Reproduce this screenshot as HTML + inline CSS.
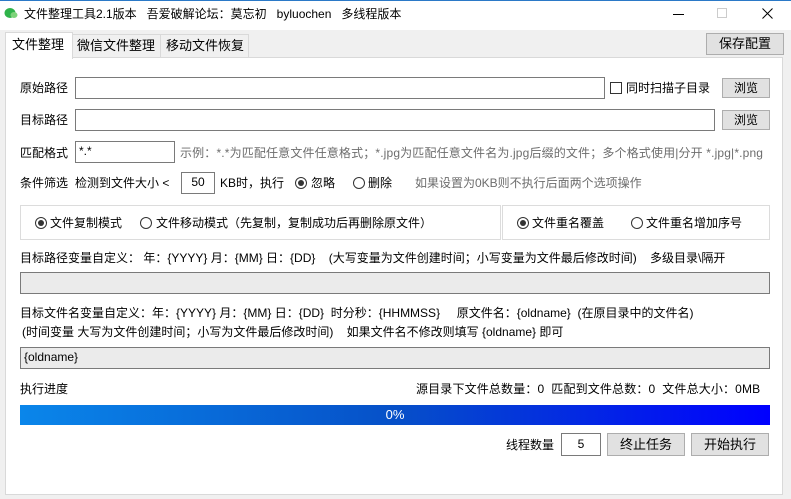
<!DOCTYPE html>
<html><head><meta charset="utf-8"><style>
*{box-sizing:border-box;margin:0;padding:0}
body{width:791px;height:499px;background:#f0f0f0;font-family:"Liberation Sans","Microsoft YaHei","Noto Sans CJK SC",sans-serif;font-size:12px;color:#000;position:relative;overflow:hidden}
.a{position:absolute;white-space:nowrap;line-height:16px}
.inp{position:absolute;background:#fff;border:1px solid #7a7a7a;line-height:19px;padding-left:3px}
.btn{position:absolute;background:#e1e1e1;border:1px solid #adadad;text-align:center}
.rad{position:absolute;width:12px;height:12px;border:1px solid #333;border-radius:50%;background:#fff}
.rad.on::after{content:"";position:absolute;left:2px;top:2px;width:6px;height:6px;border-radius:50%;background:#333}
.g{color:#6d6d6d}
.grp{position:absolute;border:1px solid #dcdcdc}
</style></head><body>
<div style="position:absolute;left:0;top:0;width:791px;height:30px;background:#fff;border-top:1px solid #2b79c7"></div>
<svg class="a" style="left:4px;top:6px" width="14" height="14" viewBox="0 0 14 14"><ellipse cx="6" cy="7" rx="5.5" ry="5" fill="#2fb34a"/><ellipse cx="10" cy="9" rx="3.5" ry="3" fill="#7dd37a"/></svg>
<div class="a" style="left:24px;top:6px">文件整理工具2.1版本&nbsp;&nbsp;&nbsp;吾爱破解论坛：莫忘初&nbsp;&nbsp;&nbsp;byluochen&nbsp;&nbsp;&nbsp;多线程版本</div>
<div style="position:absolute;left:673px;top:14px;width:11px;height:1px;background:#000"></div>
<div style="position:absolute;left:717px;top:8px;width:10px;height:10px;border:1px solid #ccc"></div>
<svg style="position:absolute;left:762px;top:8px" width="11" height="11"><path d="M0.5 0.5L10.5 10.5M10.5 0.5L0.5 10.5" stroke="#000" stroke-width="1"/></svg>

<div style="position:absolute;left:5px;top:57px;width:778px;height:438px;background:#fff;border:1px solid #d9d9d9"></div>
<div style="position:absolute;left:72px;top:34px;width:89px;height:24px;background:#f0f0f0;border:1px solid #d9d9d9"></div>
<div style="position:absolute;left:160px;top:34px;width:89px;height:24px;background:#f0f0f0;border:1px solid #d9d9d9"></div>
<div style="position:absolute;left:5px;top:32px;width:68px;height:27px;background:#fff;border:1px solid #d9d9d9;border-bottom:none"></div>
<div class="a" style="left:12px;top:37px;font-size:13px">文件整理</div>
<div class="a" style="left:77px;top:38px;font-size:13px">微信文件整理</div>
<div class="a" style="left:166px;top:38px;font-size:13px">移动文件恢复</div>
<div class="btn" style="left:706px;top:33px;width:78px;height:22px;line-height:20px;font-size:13px">保存配置</div>

<div class="a" style="left:20px;top:80px">原始路径</div>
<div class="inp" style="left:75px;top:77px;width:530px;height:22px"></div>
<div style="position:absolute;left:610px;top:82px;width:12px;height:12px;border:1px solid #333;background:#fff"></div>
<div class="a" style="left:626px;top:80px">同时扫描子目录</div>
<div class="btn" style="left:722px;top:78px;width:48px;height:20px;line-height:18px">浏览</div>

<div class="a" style="left:20px;top:112px">目标路径</div>
<div class="inp" style="left:75px;top:109px;width:640px;height:22px"></div>
<div class="btn" style="left:722px;top:110px;width:48px;height:20px;line-height:18px">浏览</div>

<div class="a" style="left:20px;top:145px">匹配格式</div>
<div class="inp" style="left:75px;top:141px;width:100px;height:22px">*.*</div>
<div class="a g" style="left:180px;top:145px;letter-spacing:0.15px">示例：*.*为匹配任意文件任意格式；*.jpg为匹配任意文件名为.jpg后缀的文件；多个格式使用|分开 *.jpg|*.png</div>

<div class="a" style="left:20px;top:175px">条件筛选</div>
<div class="a" style="left:75px;top:175px">检测到文件大小 &lt;</div>
<div class="inp" style="left:181px;top:172px;width:34px;height:22px;text-align:center;padding:0">50</div>
<div class="a" style="left:220px;top:175px">KB时，执行</div>
<div class="rad on" style="left:295px;top:177px"></div><div class="a" style="left:311px;top:175px">忽略</div>
<div class="rad" style="left:353px;top:177px"></div><div class="a" style="left:368px;top:175px">删除</div>
<div class="a g" style="left:415px;top:175px">如果设置为0KB则不执行后面两个选项操作</div>

<div class="grp" style="left:20px;top:205px;width:481px;height:35px"></div>
<div class="grp" style="left:502px;top:205px;width:268px;height:35px"></div>
<div class="rad on" style="left:35px;top:217px"></div><div class="a" style="left:50px;top:215px">文件复制模式</div>
<div class="rad" style="left:140px;top:217px"></div><div class="a" style="left:156px;top:215px">文件移动模式（先复制，复制成功后再删除原文件）</div>
<div class="rad on" style="left:517px;top:217px"></div><div class="a" style="left:532px;top:215px">文件重名覆盖</div>
<div class="rad" style="left:631px;top:217px"></div><div class="a" style="left:646px;top:215px">文件重名增加序号</div>

<div class="a" style="left:20px;top:250px">目标路径变量自定义：&nbsp;年：{YYYY} 月：{MM} 日：{DD}&nbsp;&nbsp;&nbsp;&nbsp;(大写变量为文件创建时间；小写变量为文件最后修改时间)&nbsp;&nbsp;&nbsp;&nbsp;多级目录\隔开</div>
<div class="inp" style="left:20px;top:272px;width:750px;height:22px;background:#ebebeb"></div>

<div class="a" style="left:20px;top:305px">目标文件名变量自定义：年：{YYYY} 月：{MM} 日：{DD}&nbsp;&nbsp;时分秒：{HHMMSS}&nbsp;&nbsp;&nbsp;&nbsp;&nbsp;原文件名：{oldname}&nbsp;&nbsp;(在原目录中的文件名)</div>
<div class="a" style="left:22px;top:324px">(时间变量 大写为文件创建时间；小写为文件最后修改时间)&nbsp;&nbsp;&nbsp;&nbsp;如果文件名不修改则填写 {oldname} 即可</div>
<div class="inp" style="left:20px;top:347px;width:750px;height:22px;background:#ebebeb">{oldname}</div>

<div class="a" style="left:20px;top:381px">执行进度</div>
<div class="a" style="left:416px;top:381px;letter-spacing:0.15px">源目录下文件总数量：0&nbsp;&nbsp;匹配到文件总数：0&nbsp;&nbsp;文件总大小：0MB</div>
<div style="position:absolute;left:20px;top:405px;width:750px;height:20px;background:linear-gradient(90deg,#0a86ea,#0650c8 50%,#0000ff);color:#fff;text-align:center;line-height:20px;font-size:13px">0%</div>

<div class="a" style="left:506px;top:437px">线程数量</div>
<div class="inp" style="left:561px;top:433px;width:40px;height:23px;text-align:center;padding:0;line-height:21px">5</div>
<div class="btn" style="left:607px;top:433px;width:78px;height:23px;line-height:21px;font-size:13px">终止任务</div>
<div class="btn" style="left:691px;top:433px;width:78px;height:23px;line-height:21px;font-size:13px">开始执行</div>
</body></html>
